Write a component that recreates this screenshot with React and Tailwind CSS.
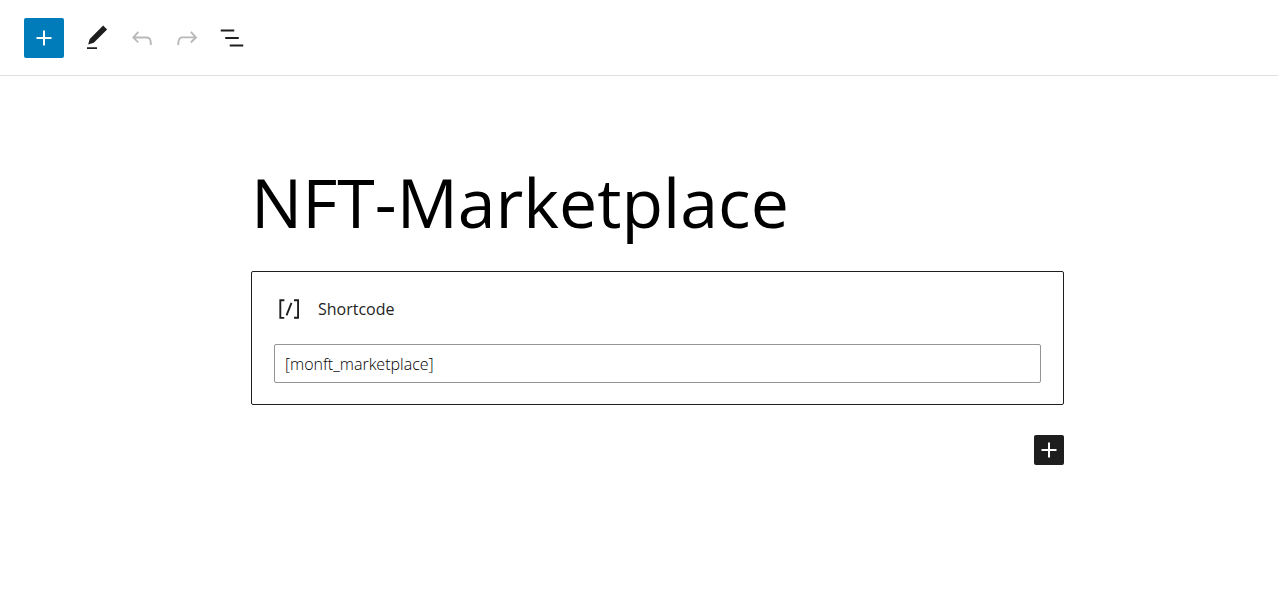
import React from "react";

const icons = {
  plus: "M18 11.2h-5.2V6h-1.6v5.2H6v1.6h5.2V18h1.6v-5.2H18z",
  edit: "M20.1 5.1L16.9 2 6.2 12.7l-1.3 4.4 4.5-1.3L20.1 5.1zM4 20.8h8v-1.5H4v1.5z",
  undo: "M18.3 11.7c-.6-.6-1.4-.9-2.3-.9H6.7l2.9-3.3-1.1-1-4.5 5L8.5 16l1-1-2.7-2.7H16c.5 0 .9.2 1.3.5 1 1 1 3.4 1 4.5v.3h1.5v-.2c0-1.5 0-4.3-1.5-5.7z",
  redo: "M15.6 6.5l-1.1 1 2.9 3.3H8c-.9 0-1.7.3-2.3.9-1.4 1.5-1.4 4.2-1.4 5.6v.2h1.5v-.3c0-1.1 0-3.5 1-4.5.3-.3.7-.5 1.3-.5h9.2L14.5 15l1.1 1.1 4.6-4.6-4.6-5z",
  listView:
    "M13.8 5.2H3v1.5h10.8V5.2zm-3.6 12v1.5H21v-1.5H10.2zm7.2-6H6.6v1.5h10.8v-1.5z",
  shortcode:
    "M16 4.2v1.5h2.5v12.5H16v1.5h4V4.2h-4zM4.2 19.8h4v-1.5H5.8V5.8h2.5V4.2h-4v15.6zm5.1-3.1l1.4.6 4-10-1.4-.6-4 10z",
};

const Icon = ({ name }) => (
  <svg
    xmlns="http://www.w3.org/2000/svg"
    viewBox="0 0 24 24"
    fill="currentColor"
    className="h-[30px] w-[30px] shrink-0"
    aria-hidden="true"
  >
    <path d={icons[name]} />
  </svg>
);

const Toolbar = () => (
  <header className="flex h-[76px] items-center border-b border-[#e0e0e0] px-6 text-[#1e1e1e]">
    <button
      type="button"
      aria-label="Toggle block inserter"
      className="flex h-10 w-10 items-center justify-center rounded-xs bg-[#007cba] text-white"
    >
      <Icon name="plus" />
    </button>
    <div className="ml-[18px] flex items-center gap-[15px]">
      <button type="button" aria-label="Tools">
        <Icon name="edit" />
      </button>
      <button
        type="button"
        aria-label="Undo"
        disabled
        className="text-[#b9b9b9]"
      >
        <Icon name="undo" />
      </button>
      <button
        type="button"
        aria-label="Redo"
        disabled
        className="text-[#b9b9b9]"
      >
        <Icon name="redo" />
      </button>
      <button type="button" aria-label="List view">
        <Icon name="listView" />
      </button>
    </div>
  </header>
);

const ShortcodeBlock = () => (
  <section className="rounded-xs border border-[#1e1e1e] px-[22px] pt-[22px] pb-[21px]">
    <label
      htmlFor="shortcode"
      className="mb-5 flex items-center gap-[14px] text-[16px] leading-[30px] text-[#1e1e1e]"
    >
      <Icon name="shortcode" />
      Shortcode
    </label>
    <input
      id="shortcode"
      type="text"
      defaultValue="[monft_marketplace]"
      className="block h-[39px] w-full rounded-xs border border-[#949494] px-[10px] text-[16px] font-light text-black outline-none"
    />
  </section>
);

export default function App() {
  return (
    <div className="min-h-screen bg-white font-['Open_Sans','Noto_Sans',sans-serif]">
      <Toolbar />
      {/* editor canvas */}
      <main className="pt-[78px] pb-32 pl-[37px]">
        <div className="mx-auto max-w-[813px]">
          <h1 className="mb-[22px] text-[68px] leading-[95px] text-black">
            NFT-Marketplace
          </h1>
          <ShortcodeBlock />
          <div className="mt-[30px] flex justify-end">
            <button
              type="button"
              aria-label="Add block"
              className="flex items-center justify-center rounded-xs bg-[#1e1e1e] text-white"
            >
              <Icon name="plus" />
            </button>
          </div>
        </div>
      </main>
    </div>
  );
}
